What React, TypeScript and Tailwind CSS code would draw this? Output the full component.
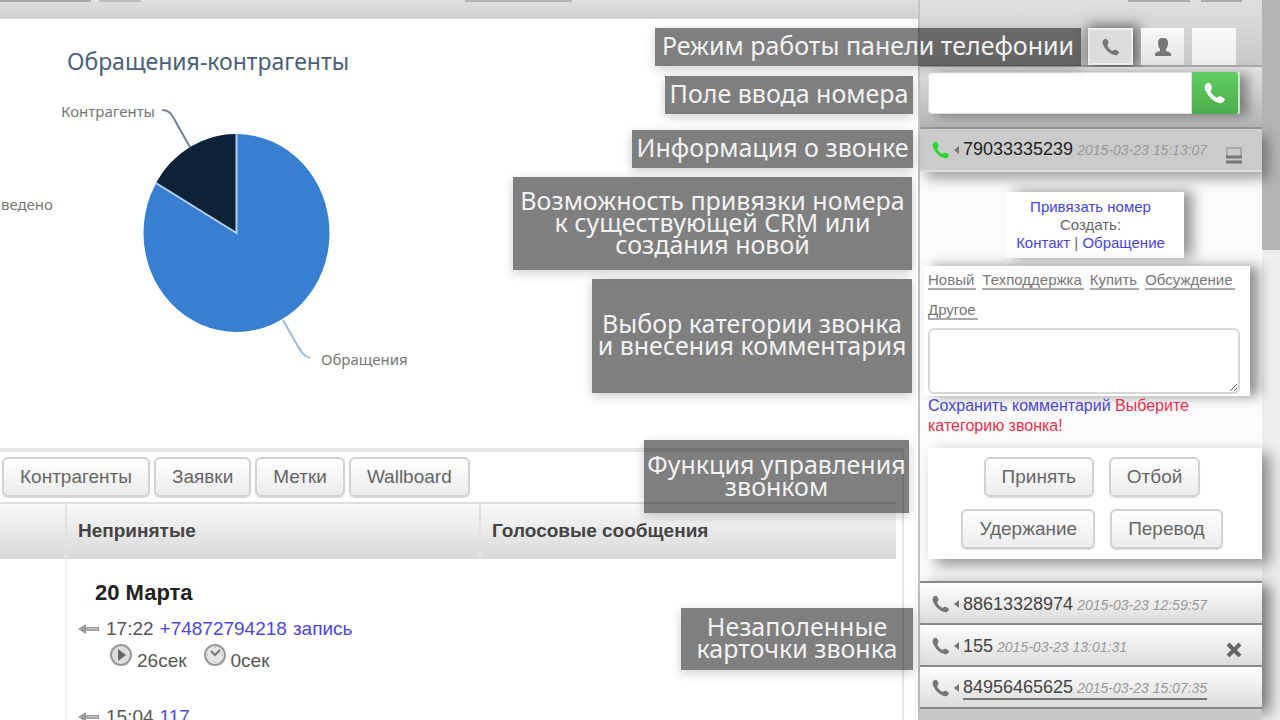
import { useState } from "react";

const tabs = ["Контрагенты", "Заявки", "Метки", "Wallboard"];

const categories = ["Новый", "Техподдержка", "Купить", "Обсуждение", "Другое"];

const waitingCalls = [
  { phone: "88613328974", date: "2015-03-23 12:59:57" },
  { phone: "155", date: "2015-03-23 13:01:31", closable: true },
  { phone: "84956465625", date: "2015-03-23 15:07:35", active: true },
];

// Пояснения поверх интерфейса
const notes = [
  { lines: ["Режим работы панели телефонии"], box: "top-[28px] right-[199px] w-[426px] h-[38px]" },
  { lines: ["Поле ввода номера"], box: "top-[76px] right-[367px] w-[248px] h-[38px]" },
  { lines: ["Информация о звонке"], box: "top-[130px] right-[367px] w-[281px] h-[38px]" },
  {
    lines: ["Возможность привязки номера", "к существующей CRM или", "создания новой"],
    box: "top-[177px] right-[368px] w-[399px] h-[93px]",
  },
  {
    lines: ["Выбор категории звонка", "и внесения комментария"],
    box: "top-[279px] right-[368px] w-[320px] h-[114px]",
  },
  { lines: ["Функция управления", "звонком"], box: "top-[440px] right-[371px] w-[265px] h-[73px]" },
  { lines: ["Незаполенные", "карточки звонка"], box: "top-[608px] right-[367px] w-[232px] h-[62px]" },
];

function Note({ lines, box }: { lines: string[]; box: string }) {
  return (
    <div
      className={`absolute flex flex-col items-center justify-center bg-black/50 pb-1 font-['Noto_Sans',sans-serif] text-[25px] leading-[22px] whitespace-nowrap text-[#f2f2f2] shadow-[0_3px_10px_rgba(0,0,0,0.2)] ${box}`}
    >
      {lines.map((line) => (
        <p key={line}>{line}</p>
      ))}
    </div>
  );
}

function GrayButton({ children }: { children: React.ReactNode }) {
  return (
    <button
      type="button"
      className="h-10 rounded-md border-2 border-[#d2d2d2] bg-linear-to-b from-white to-[#ececec] px-4 text-[19px] leading-5 text-[#666] shadow-[0_1px_1px_rgba(0,0,0,0.15)]"
    >
      {children}
    </button>
  );
}

function PieChart() {
  return (
    <svg width="480" height="429" viewBox="0 19 480 429" className="font-['Noto_Sans',sans-serif]">
      <text x="208" y="70" textAnchor="middle" fontSize="23" fill="#4a6079">
        Обращения-контрагенты
      </text>
      <text x="155" y="117" textAnchor="end" fontSize="15" fill="#777">
        Контрагенты
      </text>
      <text x="53" y="210" textAnchor="end" fontSize="15" fill="#777">
        ведено
      </text>
      <text x="321" y="365" fontSize="15" fill="#777">
        Обращения
      </text>
      <path d="M162 110 C171 110 173 117 178 126 L190 147" fill="none" stroke="#77828c" strokeWidth="2" />
      <path d="M283 320 L296 343 C301 351 303 356 310 358" fill="none" stroke="#9fbae0" strokeWidth="2" />
      <ellipse cx="236.5" cy="233" rx="93" ry="99" fill="#387fd1" />
      <path d="M236.5 233 L236.5 134 A93 99 0 0 0 156 183 Z" fill="#0d2236" />
      <path d="M236.5 134 L236.5 233 L156 183" fill="none" stroke="#b5cdec" strokeWidth="2" />
    </svg>
  );
}

function PhoneIcon({ className }: { className: string }) {
  return (
    <svg viewBox="0 0 20 20" fill="currentColor" className={className} aria-hidden="true">
      <path d="M3 1 C1 2 0 4 1 7 C3 12 8 18 14 19 C16 20 18 18 19 16 C19 15 16 13 14 13 C13 13 12 15 11 14 C9 13 6 10 6 8 C6 7 8 6 7 4 C6 2 5 0 3 1 Z" />
    </svg>
  );
}

function BackArrow() {
  return (
    <svg width="22" height="12" viewBox="0 0 22 12" className="shrink-0" aria-hidden="true">
      <path d="M0 6 L8 1 V4 H21 V8 H8 V11 Z" fill="#999" />
      <path d="M9 6 H20" stroke="#ddd" strokeWidth="1" />
    </svg>
  );
}

function PlayIcon() {
  return (
    <svg width="24" height="24" viewBox="0 0 24 24" aria-hidden="true">
      <circle cx="12" cy="12" r="10" fill="#ddd" stroke="#999" strokeWidth="2" />
      <path d="M9 6 L17 12 L9 18 Z" fill="#666" />
    </svg>
  );
}

function ClockIcon() {
  return (
    <svg width="24" height="24" viewBox="0 0 24 24" aria-hidden="true">
      <circle cx="12" cy="12" r="10" fill="#e6e6e6" stroke="#999" strokeWidth="2" />
      <path d="M8 8 L12 12 L17 7" fill="none" stroke="#777" strokeWidth="2" />
      <path d="M12 4 V5 M12 19 V20 M4 12 H5 M19 12 H20" stroke="#999" strokeWidth="1" />
    </svg>
  );
}

function PersonIcon() {
  return (
    <svg width="18" height="20" viewBox="0 0 18 20" className="mx-auto" fill="#777" aria-hidden="true">
      <path d="M9 1 C5 1 4 3 4 6 C4 9 5 11 6 12 V14 C4 15 1 15 1 17 V19 H17 V17 C17 15 14 15 12 14 V12 C13 11 14 9 14 6 C14 3 13 1 9 1 Z" />
    </svg>
  );
}

function CallTitle({ phone, date, green, active }: { phone: string; date: string; green?: boolean; active?: boolean }) {
  return (
    <>
      <PhoneIcon className={green ? "size-[18px] text-[#2fd62f]" : "size-[18px] text-[#777]"} />
      <svg width="5" height="8" viewBox="0 0 5 8" className="mx-1" aria-hidden="true">
        <path d="M5 0 V8 L0 4 Z" fill="#777" />
      </svg>
      <span className={active ? "flex items-baseline border-b-2 border-[#777]" : "flex items-baseline"}>
        <span className={green ? "text-lg leading-5 text-[#222]" : "text-lg leading-5 text-[#444]"}>{phone}</span>
        <i className="ml-1 text-sm leading-5 text-[#999]">{date}</i>
      </span>
    </>
  );
}

function Dashboard() {
  return (
    <main className="min-w-0 flex-1 overflow-hidden bg-white">
      <div className="h-[19px] border-b border-[#d6d6d6] bg-linear-to-b from-[#e0e0e0] to-[#d0d0d0]">
        <div className="flex h-[2px]">
          <span className="mr-2 w-[91px] bg-[#aaa]" />
          <span className="mr-[324px] w-[42px] bg-[#bbb]" />
          <span className="w-[107px] bg-[#b5b5b5]" />
        </div>
      </div>

      <PieChart />

      <div className="mr-[14px] border-t-4 border-r-2 border-[#e6e6e6]">
        <nav className="flex gap-1 px-0.5 py-[5px]">
          {tabs.map((tab) => (
            <GrayButton key={tab}>{tab}</GrayButton>
          ))}
        </nav>
        <div className="mr-[6px]">
          <table className="h-[240px] w-full table-fixed border-t-2 border-[#dedede] text-[19px] text-[#555]">
            <thead>
              <tr className="h-[56px] bg-linear-to-b from-[#fafafa] to-[#d9d9d9] text-left text-[#444]">
                <th className="w-[66px] border-r-2 border-[#e2e2e2]" />
                <th className="w-[414px] border-r-2 border-[#e2e2e2] px-[11px]">Непринятые</th>
                <th className="px-[11px]">Голосовые сообщения</th>
              </tr>
            </thead>
            <tbody>
              <tr className="align-top">
                <td className="border-r-2 border-[#eee]" />
                <td className="px-[11px] pt-5">
                  <h2 className="pl-[17px] text-[22px] leading-7 font-bold text-[#222]">20 Марта</h2>
                  <p className="mt-2 flex items-center gap-1.5 leading-7">
                    <BackArrow />
                    17:22
                    <a href="#call" className="text-[#5046dc]">
                      +74872794218
                    </a>
                    <a href="#record" className="text-[#5046dc]">
                      запись
                    </a>
                  </p>
                  <p className="flex items-start gap-1 pl-[31px] leading-7">
                    <PlayIcon />
                    <span className="pt-1">26сек</span>
                    <span className="w-2" />
                    <ClockIcon />
                    <span className="pt-1">0сек</span>
                  </p>
                  <p className="mt-7 flex items-center gap-1.5 leading-7">
                    <BackArrow />
                    15:04
                    <a href="#call" className="text-[#5046dc]">
                      117
                    </a>
                  </p>
                </td>
                <td />
              </tr>
            </tbody>
          </table>
        </div>
      </div>
    </main>
  );
}

function PhonePanel() {
  const [phone, setPhone] = useState("");
  const [comment, setComment] = useState("");

  return (
    <aside className="relative z-10 flex w-[344px] shrink-0 flex-col border-l-2 border-[#c4c4c4] bg-[#fbfbfb]">
      <header className="h-[67px] border-b-2 border-[#aaa] bg-linear-to-b from-[#e0e0e0] to-[#c8c8c8]">
        <div className="flex h-[2px] justify-end pr-5">
          <span className="mr-[11px] w-[62px] bg-[#aaa]" />
          <span className="w-[41px] bg-[#aaa]" />
        </div>
        <div className="flex justify-end gap-2 pt-[26px] pr-[26px]">
          <button
            type="button"
            aria-label="Звонки"
            className="h-[37px] w-[45px] border-2 border-[#eee] bg-[#dcdcdc] shadow-[3px_0_12px_3px_rgba(0,0,0,0.5)]"
          >
            <PhoneIcon className="mx-auto size-[18px] text-[#777]" />
          </button>
          <button type="button" aria-label="Контакты" className="h-[37px] w-[43px] bg-linear-to-b from-[#fafafa] to-[#e2e2e2]">
            <PersonIcon />
          </button>
          <button type="button" aria-label="Дополнительно" className="h-[37px] w-[44px] bg-linear-to-b from-[#fafafa] to-[#ededed]" />
        </div>
      </header>

      <form className="flex h-[62px] border-b-2 border-[#999] bg-linear-to-b from-[#e2e2e2] to-[#b4b4b4] px-2 pt-[5px] pb-[13px]">
        <div className="flex h-[42px] w-[312px] shadow-[8px_2px_10px_rgba(0,0,0,0.35)]">
          <input
            type="tel"
            aria-label="Номер телефона"
            value={phone}
            onChange={(e) => setPhone(e.target.value)}
            className="min-w-0 flex-1 rounded-l border border-[#ddd] bg-white px-2 text-lg outline-none"
          />
          <button
            type="button"
            aria-label="Позвонить"
            className="w-[48px] rounded-r border-r-2 border-[#c9eac9] bg-linear-to-b from-[#62cc62] to-[#4aaf4a]"
          >
            <PhoneIcon className="mx-auto size-[22px] text-white" />
          </button>
        </div>
      </form>

      <div className="flex h-[43px] items-center border-b-2 border-[#ddd] bg-[#cbcbcb] pr-5 pl-3 shadow-[6px_7px_12px_rgba(0,0,0,0.35)]">
        <CallTitle phone="79033335239" date="2015-03-23 15:13:07" green />
        <button type="button" aria-label="Свернуть" className="mt-3 ml-auto">
          <svg width="16" height="17" viewBox="0 0 16 17" aria-hidden="true">
            <path d="M1 9 V1 H15 V9" fill="none" stroke="#aaa" strokeWidth="2" />
            <path d="M0 10 H16 M0 15 H16" stroke="#777" strokeWidth="3" />
          </svg>
        </button>
      </div>

      <div className="mt-5 mr-[78px] ml-[85px] h-[66px] bg-white pt-1.5 pr-2 text-center text-[15px] leading-[18px] whitespace-nowrap shadow-[9px_-1px_12px_rgba(0,0,0,0.4)]">
        <a href="#bind" className="block text-[#4a43de]">
          Привязать номер
        </a>
        <p className="text-[#666]">Создать:</p>
        <p className="text-[#666]">
          <a href="#contact" className="text-[#4a43de]">
            Контакт
          </a>{" "}
          |{" "}
          <a href="#request" className="text-[#4a43de]">
            Обращение
          </a>
        </p>
      </div>

      <div className="mt-2 mr-3 ml-1 h-[130px] bg-white pt-0.5 pr-2.5 pl-1 shadow-[9px_0_12px_rgba(0,0,0,0.42)]">
        <div className="flex flex-wrap gap-x-1.5">
          {categories.map((c) => (
            <a key={c} href="#category" className="mt-1 mb-2 border-b-2 border-[#aaa] pr-0.5 text-[15px] leading-4 text-[#777]">
              {c}
            </a>
          ))}
        </div>
        <textarea
          aria-label="Комментарий"
          value={comment}
          onChange={(e) => setComment(e.target.value)}
          className="block h-[66px] w-full resize rounded-md border-2 border-[#d8d8d8] bg-white px-2"
        />
      </div>

      <p className="px-2 text-base leading-5 text-[#e8304e]">
        <a href="#save" className="text-[#4a43de]">
          Сохранить комментарий
        </a>{" "}
        Выберите категорию звонка!
      </p>

      <div className="mt-3 ml-2 bg-white pt-[9px] pb-2.5 shadow-[8px_6px_14px_rgba(0,0,0,0.42)]">
        <div className="mb-3 flex justify-center gap-[15px] pr-1.5">
          <GrayButton>Принять</GrayButton>
          <GrayButton>Отбой</GrayButton>
        </div>
        <div className="flex justify-center gap-[15px] pr-1.5">
          <GrayButton>Удержание</GrayButton>
          <GrayButton>Перевод</GrayButton>
        </div>
      </div>

      <ul className="mt-[22px] border-b-2 border-[#888] shadow-[8px_4px_14px_rgba(0,0,0,0.5)]">
        {waitingCalls.map((call) => (
          <li
            key={call.phone}
            className="flex h-[42px] items-center border-t-2 border-[#888] bg-linear-to-b from-white to-[#dcdcdc] pt-0.5 pr-5 pl-3"
          >
            <CallTitle phone={call.phone} date={call.date} active={call.active} />
            {call.closable && (
              <button type="button" aria-label="Закрыть" className="mt-2 ml-auto">
                <svg width="16" height="16" viewBox="0 0 16 16" aria-hidden="true">
                  <path d="M2 2 L14 14 M14 2 L2 14" stroke="#666" strokeWidth="4" />
                </svg>
              </button>
            )}
          </li>
        ))}
      </ul>
      <div className="flex-1 bg-[#c8c8c8]" />
    </aside>
  );
}

export default function App() {
  return (
    <div className="relative flex h-screen overflow-hidden bg-white font-['Liberation_Sans',Arial,sans-serif]">
      <Dashboard />
      <PhonePanel />
      <div className="w-[18px] shrink-0 bg-[#eee]">
        <div className="h-[250px] bg-[#b4b4b4]" />
      </div>
      <div className="pointer-events-none absolute inset-0 z-20">
        {notes.map((note) => (
          <Note key={note.box} lines={note.lines} box={note.box} />
        ))}
      </div>
    </div>
  );
}
